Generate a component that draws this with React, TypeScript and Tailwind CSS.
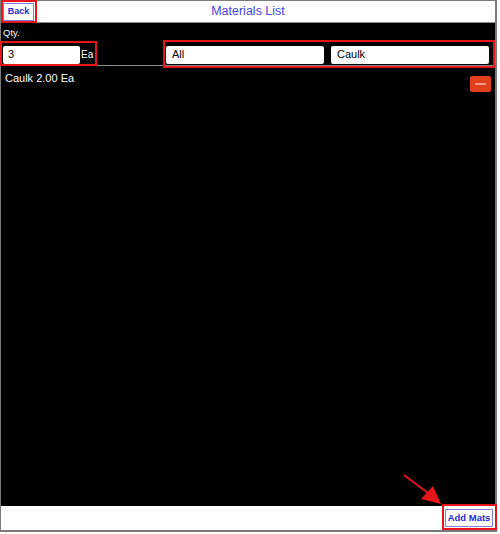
import React from "react";

export default function App() {
  const font = { fontFamily: '"Liberation Sans", Arial, sans-serif' };
  return (
    <div className="w-[500px] h-[534px] bg-white relative overflow-hidden" style={font}>
      <div className="w-[497px] h-[532px] border-l border-t border-r-2 border-b-2 border-[#7a7a7a] flex flex-col bg-black">
        {/* header */}
        <div className="h-[22px] bg-white border-b border-[#8a8a8a] flex items-center relative shrink-0">
          <div className="absolute left-0 top-[-1px] w-[36px] h-[23px] border-2 border-[#e8141c]" />
          <button className="ml-[2px] mt-[1px] w-[31px] h-[18px] border border-[#8080e0] bg-white text-[#2a2ad0] text-[9px] font-bold flex items-center justify-center">
            Back
          </button>
          <div className="absolute left-0 right-0 top-0 h-full flex items-center justify-center pointer-events-none">
            <span className="text-[12.5px] text-[#4545d8]">Materials List</span>
          </div>
        </div>
        {/* body */}
        <div className="flex-1 flex flex-col relative">
          <div className="text-white text-[9.5px] pl-[2px] pt-[3px] h-[21px]">Qty.</div>
          <div className="flex items-center h-[22px] border-b border-[#8a8a8a] relative">
            <div className="absolute left-[-1px] top-[-3px] w-[97px] h-[25px] border-2 border-[#e8141c]" />
            <div className="w-[96px] shrink-0 flex items-center">
              <div className="ml-[2px] w-[77px] h-[18px] bg-white rounded-[2px] flex items-center pl-[5px] text-[11px] text-black">3</div>
              <span className="text-white text-[10px] ml-[1px]">Ea</span>
            </div>
            <div className="absolute left-[162px] top-[-4px] w-[332px] h-[28px] border-2 border-[#e8141c]" />
            <div className="ml-[69px] w-[158px] h-[18px] bg-white rounded-[2px] flex items-center pl-[6px] text-[11px] text-black">All</div>
            <div className="ml-[7px] w-[158px] h-[18px] bg-white rounded-[2px] flex items-center pl-[6px] text-[11px] text-black">Caulk</div>
          </div>
          <div className="flex items-start justify-between pt-[5px] pl-[4px] pr-[4px]">
            <span className="text-white text-[11px] leading-[14px]">Caulk 2.00 Ea</span>
            <button className="mt-[5px] w-[21px] h-[16px] bg-[#e0401c] rounded-[2px] flex items-center justify-center">
              <span className="block w-[11px] h-[2px] bg-[#f39a88]" />
            </button>
          </div>
        </div>
        {/* footer */}
        <div className="h-[24px] bg-white flex items-center justify-end relative shrink-0">
          <div className="absolute left-[441px] top-[-2px] w-[55px] h-[26px] border-2 border-[#e8141c]" />
          <button className="mr-[2px] w-[48px] h-[18px] border border-[#8080e0] bg-white text-[#2a2ad0] text-[9.5px] font-bold flex items-center justify-center">
            Add Mats
          </button>
        </div>
      </div>
      <svg className="absolute left-[400px] top-[470px] z-10" width="45" height="40" viewBox="0 0 45 40">
        <line x1="4" y1="5" x2="28" y2="23" stroke="#e8141c" strokeWidth="2" />
        <polygon points="41,34 21,29 33,16" fill="#e8141c" />
      </svg>
    </div>
  );
}
